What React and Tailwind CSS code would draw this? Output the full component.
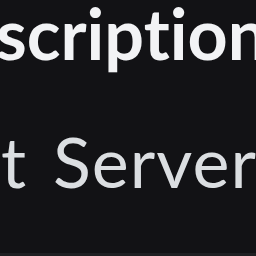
import React from 'react';

const App = () => {
  return (
    <div className="w-[256px] h-[256px] bg-[#121215] overflow-hidden flex flex-col [font-variant-ligatures:none]" style={{ fontFamily: 'Lato, "Noto Sans", sans-serif' }}>
      <div className="flex-1 flex flex-col">
        {/* 标题 */}
        <div className="ml-[-121px] mt-[-2px] whitespace-nowrap text-[70px] leading-none font-bold text-[#f2f3f5]">
          Subscription
        </div>
        {/* 服务器名 */}
        <div className="ml-[-102px] mt-[58px] whitespace-nowrap text-[70px] leading-none tracking-[1px] [word-spacing:7px] text-[#dbdee1]">
          Test Server
        </div>
      </div>
      <div className="h-[3px] bg-[#1e1f22]" />
    </div>
  );
};

export default App;
